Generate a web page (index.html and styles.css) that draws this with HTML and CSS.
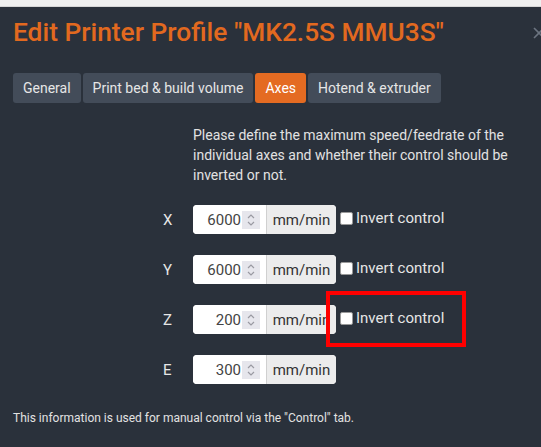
FILE: index.html
```html
<!DOCTYPE html>
<html>
<head>
<meta charset="utf-8">
<link rel="stylesheet" href="styles.css">
</head>
<body>
<div class="topbar"></div>
<div class="modal">
  <svg class="close" width="12" height="12" viewBox="0 0 12 12"><path d="M1 1 L11 11 M11 1 L1 11" stroke="#6c7480" stroke-width="1.6"/></svg>
  <h1 class="title">Edit Printer Profile "MK2.5S MMU3S"</h1>
  <div class="tabs">
    <div class="tab">General</div>
    <div class="tab">Print bed &amp; build volume</div>
    <div class="tab active">Axes</div>
    <div class="tab">Hotend &amp; extruder</div>
  </div>
  <div class="content">
    <p class="desc">Please define the maximum speed/feedrate of the individual axes and whether their control should be inverted or not.</p>
    <div class="rows">
      <div class="row">
        <div class="label">X</div>
        <div class="group"><div class="num"><span>6000</span><span class="spin"><svg width="10" height="14" viewBox="0 0 10 14"><path d="M2 5 L5 2 L8 5 M2 9 L5 12 L8 9" fill="none" stroke="#9a9aa2" stroke-width="1.2"/></svg></span></div><div class="unit">mm/min</div></div>
        <label class="check"><span class="box"></span>Invert control</label>
      </div>
      <div class="row">
        <div class="label">Y</div>
        <div class="group"><div class="num"><span>6000</span><span class="spin"><svg width="10" height="14" viewBox="0 0 10 14"><path d="M2 5 L5 2 L8 5 M2 9 L5 12 L8 9" fill="none" stroke="#9a9aa2" stroke-width="1.2"/></svg></span></div><div class="unit">mm/min</div></div>
        <label class="check"><span class="box"></span>Invert control</label>
      </div>
      <div class="row">
        <div class="label">Z</div>
        <div class="group"><div class="num"><span>200</span><span class="spin"><svg width="10" height="14" viewBox="0 0 10 14"><path d="M2 5 L5 2 L8 5 M2 9 L5 12 L8 9" fill="none" stroke="#9a9aa2" stroke-width="1.2"/></svg></span></div><div class="unit">mm/min</div></div>
        <label class="check"><span class="box"></span>Invert control</label>
        <div class="highlight"></div>
      </div>
      <div class="row">
        <div class="label">E</div>
        <div class="group"><div class="num"><span>300</span><span class="spin"><svg width="10" height="14" viewBox="0 0 10 14"><path d="M2 5 L5 2 L8 5 M2 9 L5 12 L8 9" fill="none" stroke="#9a9aa2" stroke-width="1.2"/></svg></span></div><div class="unit">mm/min</div></div>
      </div>
    </div>
  </div>
  <p class="footer">This information is used for manual control via the "Control" tab.</p>
</div>
</body>
</html>
```

FILE: styles.css
```css
* { box-sizing: border-box; }
html, body { margin: 0; padding: 0; }
body {
  font-family: Roboto, "Liberation Sans", sans-serif;
  background: #2a313b;
  width: 541px;
  height: 447px;
  overflow: hidden;
}
.topbar {
  height: 7px;
  background: #efefef;
  border-bottom: 1px solid #d6d6d6;
}
.modal {
  position: relative;
  background: #2a313b;
  padding: 11px 0 0 13px;
  height: 440px;
  overflow: hidden;
}
.close {
  position: absolute;
  left: 533px;
  top: 20px;
}
.title {
  margin: 0;
  font-size: 26.3px;
  line-height: 29px;
  font-weight: 500;
  color: #e2691f;
  white-space: nowrap;
}
.tabs {
  display: flex;
  gap: 2px;
  margin-top: 26px;
}
.tab {
  background: #434c59;
  color: #e6e6e6;
  font-size: 14px;
  line-height: 20px;
  padding: 5px 10px;
  border-radius: 3px;
}
.tab.active {
  background: #e46b22;
  color: #fff;
}
.content {
  padding-left: 150px;
}
.desc {
  margin: 22px 0 0 30px;
  width: 320px;
  font-size: 14px;
  line-height: 20px;
  color: #e2e2e2;
}
.rows {
  margin-top: 20px;
  display: flex;
  flex-direction: column;
  gap: 21px;
}
.row {
  position: relative;
  display: flex;
  align-items: center;
  height: 29px;
}
.label {
  width: 30px;
  font-size: 15px;
  color: #e6e6e6;
}
.group {
  display: flex;
  height: 29px;
  width: 143px;
  border-radius: 4px;
  overflow: hidden;
  background: #fff;
}
.num {
  width: 73px;
  display: flex;
  align-items: center;
  justify-content: flex-end;
  padding-right: 6px;
  font-size: 15px;
  color: #444;
  background: #fff;
}
.spin {
  width: 18px;
  height: 18px;
  background: #e6e6ec;
  display: flex;
  align-items: center;
  justify-content: center;
  margin-left: 1px;
}
.unit {
  flex: 1;
  background: #ececec;
  border-left: 1px solid #d0d0d0;
  display: flex;
  align-items: center;
  justify-content: center;
  font-size: 15px;
  color: #333;
}
.check {
  display: flex;
  align-items: center;
  margin-left: 4px;
  font-size: 15px;
  color: #e6e6e6;
  margin-top: -3px;
}
.box {
  width: 13px;
  height: 13px;
  background: #fff;
  border: 1px solid #999;
  border-radius: 2px;
  margin-right: 3px;
}
.highlight {
  position: absolute;
  left: 163px;
  top: -14px;
  width: 140px;
  height: 56px;
  border: 4px solid #ff0000;
}
.footer {
  margin: 26px 0 0 0;
  font-size: 12px;
  line-height: 16px;
  color: #e2e2e2;
}
```
